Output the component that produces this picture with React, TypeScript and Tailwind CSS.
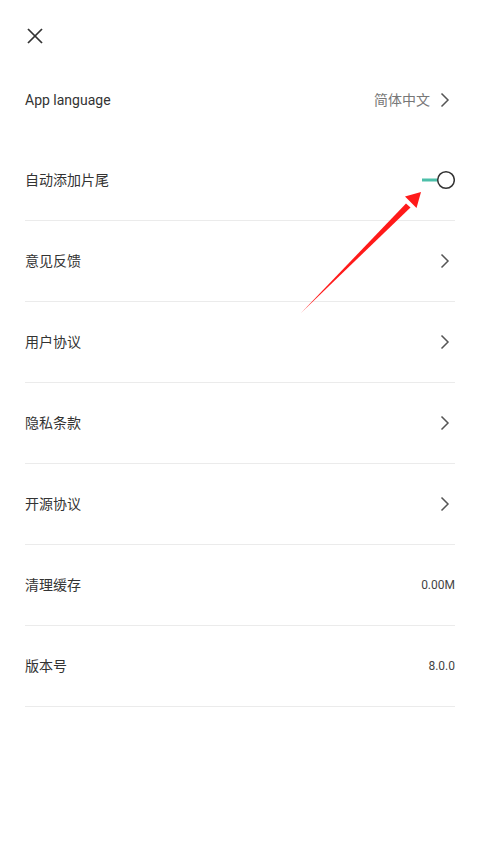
import React from "react";

function Chevron() {
  return (
    <svg width="10" height="16" viewBox="0 0 10 16" className="ml-[10px] mr-[5px]">
      <polyline points="1.5,1.5 8,8 1.5,14.5" fill="none" stroke="#555" strokeWidth="1.5" />
    </svg>
  );
}

function Toggle() {
  return (
    <svg width="36" height="20" viewBox="0 0 36 20">
      <line x1="3" y1="10" x2="19" y2="10" stroke="#4dbfa9" strokeWidth="3" />
      <circle cx="27" cy="10" r="8.3" fill="#fff" stroke="#333" strokeWidth="1.5" />
    </svg>
  );
}

const rows = [
  { label: "意见反馈", chevron: true },
  { label: "用户协议", chevron: true },
  { label: "隐私条款", chevron: true },
  { label: "开源协议", chevron: true },
  { label: "清理缓存", value: "0.00M" },
  { label: "版本号", value: "8.0.0" },
];

export default function App() {
  return (
    <div
      className="relative min-h-[853px] w-[480px] bg-white px-[25px] text-[#333]"
      style={{ fontFamily: '"Roboto", "Noto Sans CJK SC", sans-serif' }}
    >
      <div className="h-[60px] pt-[27px]">
        <svg width="18" height="18" viewBox="0 0 18 18" className="ml-[1px]">
          <line x1="2" y1="2" x2="16" y2="16" stroke="#333" strokeWidth="1.7" />
          <line x1="16" y1="2" x2="2" y2="16" stroke="#333" strokeWidth="1.7" />
        </svg>
      </div>

      <div className="flex h-[80px] items-center justify-between text-[14px]">
        <span>App language</span>
        <div className="flex items-center">
          <span className="text-[#777]">简体中文</span>
          <Chevron />
        </div>
      </div>

      <div className="flex h-[81px] items-center justify-between border-b border-[#ebebeb] text-[14px]">
        <span>自动添加片尾</span>
        <Toggle />
      </div>

      {rows.map((r) => (
        <div
          key={r.label}
          className="flex h-[81px] items-center justify-between border-b border-[#ebebeb] text-[14px]"
        >
          <span>{r.label}</span>
          {r.chevron ? <Chevron /> : <span className="text-[12px] text-[#444]">{r.value}</span>}
        </div>
      ))}

      <svg
        className="pointer-events-none absolute left-0 top-0"
        width="480"
        height="853"
        viewBox="0 0 480 853"
      >
        <polygon points="301,313 406,203.5 410.5,207.5" fill="#ff1a1a" />
        <polygon points="421,192 405,196.5 416.5,208" fill="#ff1a1a" />
      </svg>
    </div>
  );
}
